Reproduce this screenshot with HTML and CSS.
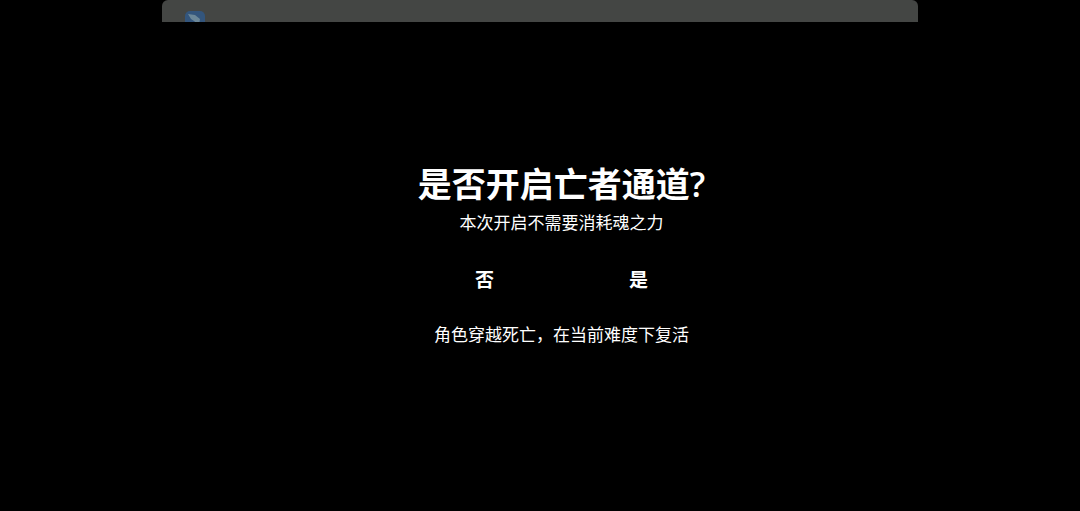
FILE: index.html
```html
<!DOCTYPE html>
<html lang="zh-CN">
<head>
<meta charset="utf-8">
<meta name="viewport" content="width=device-width, initial-scale=1">
<title>亡者通道</title>
<link rel="stylesheet" href="styles.css">
</head>
<body>
<header class="notice">
<svg class="notice-icon" viewBox="0 0 20 20" aria-hidden="true">
<rect width="20" height="20" rx="5" fill="#33557c"/>
<path d="M3 3 L10 4 L15 8 L14 14 L9 10 L6 8 Z" fill="#6b8798"/>
</svg>
</header>
<main class="dialog">
<h1 class="title">是否开启亡者通道<span class="mark">?</span></h1>
<p class="cost">本次开启不需要消耗魂之力</p>
<div class="choices">
<button class="choice" type="button">否</button>
<button class="choice" type="button">是</button>
</div>
<p class="hint">角色穿越死亡，在当前难度下复活</p>
</main>
</body>
</html>
```

FILE: styles.css
```css
* { box-sizing: border-box; }
body {
  margin: 0;
  background: #000;
  color: #fff;
  font-family: "Noto Sans", "Noto Sans CJK SC", sans-serif;
}
.notice {
  width: 70%;
  height: 22px;
  margin: 0 auto;
  padding: 11px 23px 0;
  background: #444644;
  border-radius: 6px 6px 0 0;
  overflow: hidden;
}
.notice-icon { display: block; width: 20px; height: 20px; }
.dialog {
  display: flex;
  flex-direction: column;
  align-items: center;
  padding: 137px 0 0 43px;
}
.title { margin: 0; font-size: 34px; line-height: 50px; font-weight: 700; }
.mark { font-family: "Open Sans", "Noto Sans", sans-serif; font-weight: 600; }
.cost, .hint { margin: 0; font-size: 17px; line-height: 26px; }
.cost { margin-top: 1px; }
.choices { display: flex; gap: 114px; margin: 30px 0 28px; }
.choice {
  width: 40px;
  padding: 0;
  border: 0;
  background: transparent;
  color: inherit;
  font: inherit;
  font-size: 19px;
  font-weight: 700;
  line-height: 28px;
}
```
